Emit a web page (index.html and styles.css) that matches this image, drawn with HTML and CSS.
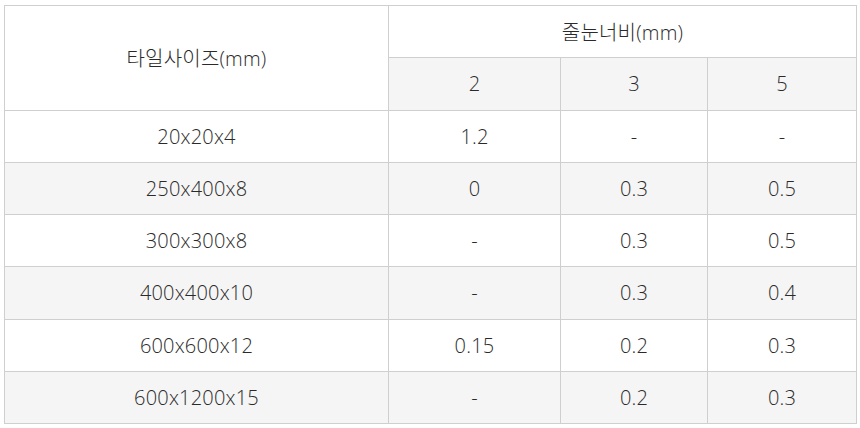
FILE: index.html
```html
<!DOCTYPE html>
<html lang="ko">
<head>
<meta charset="utf-8">
<link rel="stylesheet" href="styles.css">
</head>
<body>
<table class="grout">
  <colgroup>
    <col class="c1"><col class="c2"><col class="c3"><col class="c4">
  </colgroup>
  <thead>
    <tr>
      <th rowspan="2" class="white">타일사이즈(mm)</th>
      <th colspan="3" class="white">줄눈너비(mm)</th>
    </tr>
    <tr class="gray">
      <th>2</th><th>3</th><th>5</th>
    </tr>
  </thead>
  <tbody>
    <tr><td>20x20x4</td><td>1.2</td><td>-</td><td>-</td></tr>
    <tr class="gray"><td>250x400x8</td><td>0</td><td>0.3</td><td>0.5</td></tr>
    <tr><td>300x300x8</td><td>-</td><td>0.3</td><td>0.5</td></tr>
    <tr class="gray"><td>400x400x10</td><td>-</td><td>0.3</td><td>0.4</td></tr>
    <tr><td>600x600x12</td><td>0.15</td><td>0.2</td><td>0.3</td></tr>
    <tr class="gray"><td>600x1200x15</td><td>-</td><td>0.2</td><td>0.3</td></tr>
  </tbody>
</table>
</body>
</html>
```
FILE: styles.css
```css
html, body {
  margin: 0;
  padding: 0;
  background: #fff;
}
body {
  padding: 5px 0 0 4px;
}
.grout {
  border-collapse: collapse;
  table-layout: fixed;
  width: 852px;
  font-family: "Open Sans", "Noto Sans CJK KR", sans-serif;
  font-size: 20px;
  font-weight: 300;
  letter-spacing: 0.2px;
  color: #2a2a2a;
}
.c1 { width: 384px; }
.c2 { width: 172px; }
.c3 { width: 147px; }
.c4 { width: 149px; }
.grout th, .grout td {
  border: 1px solid #cfcfcf;
  text-align: center;
  vertical-align: middle;
  font-weight: 300;
  height: 51.25px;
  padding: 0;
  background: #fff;
}
.grout .gray th, .grout .gray td {
  background: #f5f5f5;
}
```
